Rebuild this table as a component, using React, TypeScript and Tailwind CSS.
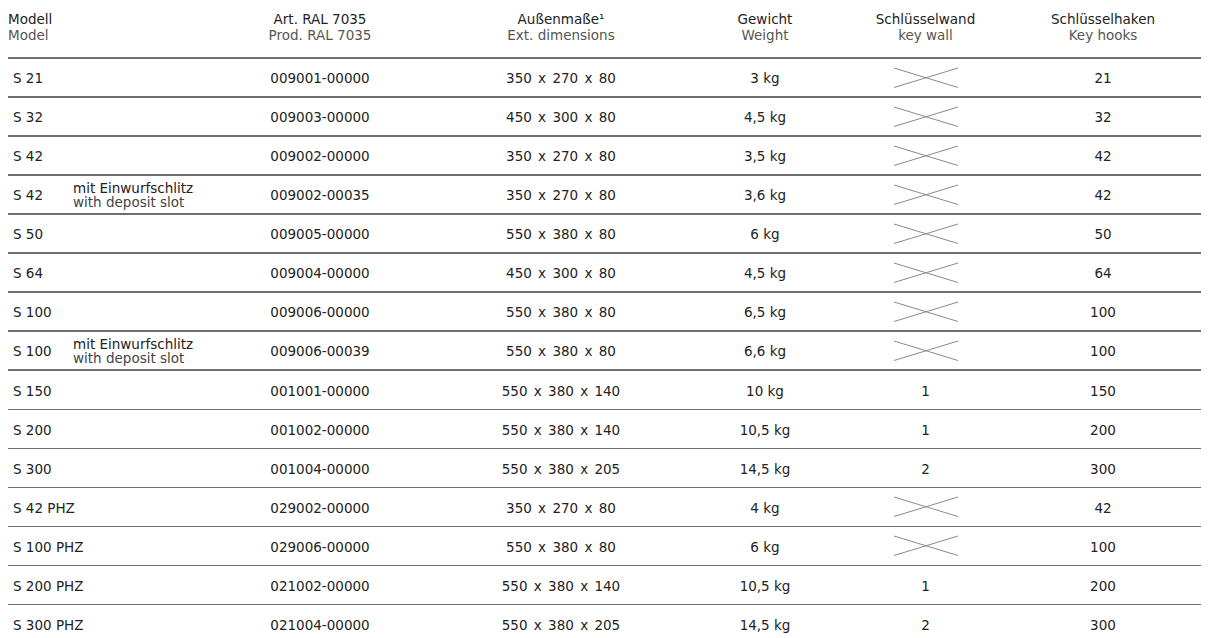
import React from "react";

type Row = {
  model: string;
  note?: boolean;
  art: string;
  dim: string;
  weight: string;
  wall: string | null;
  hooks: string;
};

const rows: Row[] = [
  { model: "S 21", art: "009001-00000", dim: "350 x 270 x 80", weight: "3 kg", wall: null, hooks: "21" },
  { model: "S 32", art: "009003-00000", dim: "450 x 300 x 80", weight: "4,5 kg", wall: null, hooks: "32" },
  { model: "S 42", art: "009002-00000", dim: "350 x 270 x 80", weight: "3,5 kg", wall: null, hooks: "42" },
  { model: "S 42", note: true, art: "009002-00035", dim: "350 x 270 x 80", weight: "3,6 kg", wall: null, hooks: "42" },
  { model: "S 50", art: "009005-00000", dim: "550 x 380 x 80", weight: "6 kg", wall: null, hooks: "50" },
  { model: "S 64", art: "009004-00000", dim: "450 x 300 x 80", weight: "4,5 kg", wall: null, hooks: "64" },
  { model: "S 100", art: "009006-00000", dim: "550 x 380 x 80", weight: "6,5 kg", wall: null, hooks: "100" },
  { model: "S 100", note: true, art: "009006-00039", dim: "550 x 380 x 80", weight: "6,6 kg", wall: null, hooks: "100" },
  { model: "S 150", art: "001001-00000", dim: "550 x 380 x 140", weight: "10 kg", wall: "1", hooks: "150" },
  { model: "S 200", art: "001002-00000", dim: "550 x 380 x 140", weight: "10,5 kg", wall: "1", hooks: "200" },
  { model: "S 300", art: "001004-00000", dim: "550 x 380 x 205", weight: "14,5 kg", wall: "2", hooks: "300" },
  { model: "S 42 PHZ", art: "029002-00000", dim: "350 x 270 x 80", weight: "4 kg", wall: null, hooks: "42" },
  { model: "S 100 PHZ", art: "029006-00000", dim: "550 x 380 x 80", weight: "6 kg", wall: null, hooks: "100" },
  { model: "S 200 PHZ", art: "021002-00000", dim: "550 x 380 x 140", weight: "10,5 kg", wall: "1", hooks: "200" },
  { model: "S 300 PHZ", art: "021004-00000", dim: "550 x 380 x 205", weight: "14,5 kg", wall: "2", hooks: "300" },
];

const cols = "grid grid-cols-[192px_240px_242px_166px_155px_200px]";

function Cross() {
  return (
    <svg width="66" height="22" viewBox="0 0 66 22" className="block">
      <line x1="1" y1="20.5" x2="65" y2="1" stroke="#8a8a8a" strokeWidth="1" />
      <line x1="1" y1="1" x2="65" y2="20.5" stroke="#8a8a8a" strokeWidth="1" />
    </svg>
  );
}

export default function App() {
  return (
    <div className="bg-white w-[1209px] h-[638px] overflow-hidden px-2 font-['DejaVu_Sans',Verdana,sans-serif] text-[13.5px] text-[#222]">
      {/* Header */}
      <div className={`${cols} h-[59px] border-b-2 border-[#6f6f6f] leading-[16px] pt-[11px]`}>
        <div>
          <div className="text-[#222]">Modell</div>
          <div className="text-[#555]">Model</div>
        </div>
        <div className="text-center">
          <div>Art. RAL 7035</div>
          <div className="text-[#555]">Prod. RAL 7035</div>
        </div>
        <div className="text-center">
          <div>Außenmaße¹</div>
          <div className="text-[#555]">Ext. dimensions</div>
        </div>
        <div className="text-center">
          <div>Gewicht</div>
          <div className="text-[#555]">Weight</div>
        </div>
        <div className="text-center">
          <div>Schlüsselwand</div>
          <div className="text-[#555]">key wall</div>
        </div>
        <div className="text-center">
          <div>Schlüsselhaken</div>
          <div className="text-[#555]">Key hooks</div>
        </div>
      </div>

      {rows.map((r, i) => (
        <div
          key={i}
          className={`${cols} items-center h-[39px] pt-[2px] border-[#6f6f6f] whitespace-nowrap ${
            i < 8 ? "border-b-2" : "border-b"
          } ${i === rows.length - 1 ? "border-b-0" : ""}`}
        >
          <div className="flex items-center pl-[5px]">
            <span className="min-w-[60px]">{r.model}</span>
            {r.note && (
              <div className="leading-[14px] -mt-[1px]">
                <div>mit Einwurfschlitz</div>
                <div className="text-[#444]">with deposit slot</div>
              </div>
            )}
          </div>
          <div className="text-center">{r.art}</div>
          <div className="text-center [word-spacing:2px]">{r.dim}</div>
          <div className="text-center">{r.weight}</div>
          <div className="flex justify-center -mt-[2px]">
            {r.wall ? <span className="mt-[2px]">{r.wall}</span> : <Cross />}
          </div>
          <div className="text-center">{r.hooks}</div>
        </div>
      ))}
    </div>
  );
}
